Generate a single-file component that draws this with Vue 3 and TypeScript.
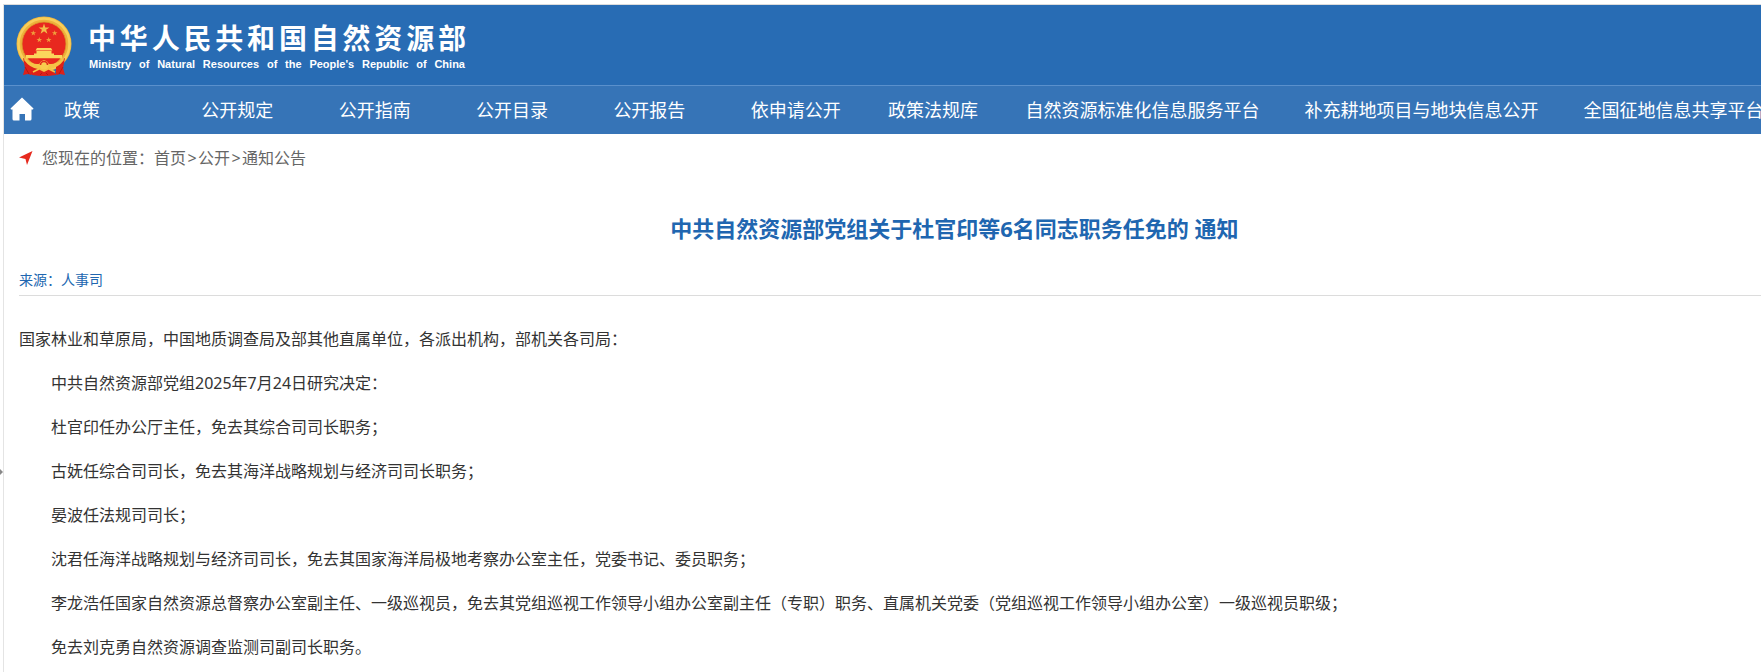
<script setup lang="ts">
const navItems: string[] = [
  '政策',
  '公开规定',
  '公开指南',
  '公开目录',
  '公开报告',
  '依申请公开',
  '政策法规库',
  '自然资源标准化信息服务平台',
  '补充耕地项目与地块信息公开',
  '全国征地信息共享平台',
]

const crumbs: string[] = ['首页', '公开', '通知公告']

const paragraphs: string[] = [
  '中共自然资源部党组2025年7月24日研究决定：',
  '杜官印任办公厅主任，免去其综合司司长职务；',
  '古妩任综合司司长，免去其海洋战略规划与经济司司长职务；',
  '晏波任法规司司长；',
  '沈君任海洋战略规划与经济司司长，免去其国家海洋局极地考察办公室主任，党委书记、委员职务；',
  '李龙浩任国家自然资源总督察办公室副主任、一级巡视员，免去其党组巡视工作领导小组办公室副主任（专职）职务、直属机关党委（党组巡视工作领导小组办公室）一级巡视员职级；',
  '免去刘克勇自然资源调查监测司副司长职务。',
]
</script>

<template>
  <div class="viewport">
    <div class="page">
      <header class="banner">
        <svg class="emblem" viewBox="0 0 56 60" aria-hidden="true">
          <circle cx="28" cy="28" r="27.500" fill="#eeb23c" />
          <circle cx="28" cy="28" r="25.500" fill="none" stroke="#f8cf5a" stroke-width="2.500" />
          <circle cx="28" cy="28" r="22" fill="#e8281f" stroke="#d99a2b" stroke-width="0.800" />
          <path fill="#f2bd4a" d="M28 7.500l1.300 3.900h4.100l-3.300 2.400 1.300 3.900L28 15.300l-3.400 2.400 1.300-3.900-3.300-2.400h4.100z" />
          <g fill="#efa03c">
            <path d="M17.300 14.200l.7 2h2.100l-1.700 1.300.6 2-1.700-1.200-1.700 1.200.6-2-1.700-1.300h2.100z" />
            <path d="M38.700 14.200l.7 2h2.100l-1.700 1.300.6 2-1.700-1.200-1.700 1.200.6-2-1.700-1.300h2.100z" />
            <path d="M23.300 20.900l.7 2h2.100l-1.700 1.300.6 2-1.700-1.200-1.700 1.200.6-2-1.700-1.300h2.100z" />
            <path d="M32.700 20.900l.7 2h2.100l-1.700 1.300.6 2-1.700-1.200-1.700 1.200.6-2-1.700-1.300h2.100z" />
          </g>
          <path fill="#fbd65c" d="M21 32h14l1.500 2.500h-17zM20.500 35h15v2.500h-15zM18 37.500h20V39l8 0v3.500H10V39h8z" />
          <path fill="#e8281f" d="M12 42.500h32q-5 6-11 7h-10q-6-1-11-7z" />
          <path fill="#de2119" d="M7 42l9 5 7 5-8 7-3-1-5 1 2-7zM49 42l-9 5-7 5 8 7 3-1 5 1-2-7zM16 51q12-3 24 0v8q-12 2-24 0z" />
          <path fill="#f5c346" d="M9 42q9 8 15 5.500l4-3.500 4 3.500Q38 50 47 42l1 2q-6 8-14 9l-6 3-6-3q-8-1-14-9z" />
          <circle cx="28" cy="49" r="4.500" fill="#f8cb4e" />
          <path fill="none" stroke="#e02a1c" stroke-width="1.600" d="M24.500 49a3.500 3.500 0 0 1 7 0" />
          <path fill="none" stroke="#f5c346" stroke-width="1.800" d="M17 56l6-3M39 56l-6-3" />
          <path fill="none" stroke="#a91712" stroke-width="0.800" d="M9 51l4 7M47 51l-4 7M26 57l-2 2M30 57l2 2" />
        </svg>
        <div class="brand">
          <div class="brand-zh">中华人民共和国自然资源部</div>
          <div class="brand-en">Ministry of Natural Resources of the People's Republic of China</div>
        </div>
      </header>

      <nav class="nav">
        <a class="home" href="#" aria-label="首页">
          <svg viewBox="0 0 24 24" aria-hidden="true">
            <path fill="#fff" d="M12 0.500L23.500 11.500 23 12.500H21.500V22q0 1.500-1.500 1.500H15V17h-5.500v6.500H4Q2.500 23.500 2.500 22v-9.500H1L0.500 11.500z" />
          </svg>
        </a>
        <a v-for="item in navItems" :key="item" class="nav-link" href="#">{{ item }}</a>
      </nav>

      <main class="content">
        <div class="crumbs">
          <svg class="pointer" viewBox="0 0 14 14" aria-hidden="true">
            <path fill="#e62a1e" d="M13.500 0L8 14 6.500 8 0 6.500z" />
          </svg>
          <span>您现在的位置：</span>
          <template v-for="(crumb, i) in crumbs" :key="crumb">
            <span v-if="i > 0" class="sep">&gt;</span>
            <a href="#">{{ crumb }}</a>
          </template>
        </div>

        <h1 class="title">中共自然资源部党组关于杜官印等6名同志职务任免的 通知</h1>
        <div class="source">来源：人事司</div>

        <article class="body">
          <p class="lead">国家林业和草原局，中国地质调查局及部其他直属单位，各派出机构，部机关各司局：</p>
          <p v-for="text in paragraphs" :key="text">{{ text }}</p>
        </article>
      </main>
    </div>
    <span class="handle"></span>
  </div>
</template>

<style>
body {
  margin: 0;
  background: #fff;
}
</style>

<style scoped>
.viewport {
  position: relative;
  overflow: hidden;
  min-height: 100vh;
  box-sizing: border-box;
  padding-top: 4px;
  font-family: "Noto Sans", "Noto Sans CJK SC", sans-serif;
  color: #333;
}

.page {
  width: 108vw;
  min-height: calc(100vh - 4px);
  box-sizing: border-box;
  margin-left: 3px;
  border-top: 1px solid #dcdcdc;
  border-left: 1px solid #e4e4e4;
}

a {
  color: inherit;
  text-decoration: none;
}

.banner {
  display: flex;
  align-items: flex-start;
  gap: 16px;
  height: 80px;
  box-sizing: border-box;
  padding: 11px 12px 0;
  background: #286cb4;
}

.emblem {
  width: 56px;
  height: 60px;
}

.brand {
  width: 378px;
  padding-top: 3px;
  color: #fff;
  font-weight: 700;
  text-align: justify;
  text-align-last: justify;
  white-space: nowrap;
}

.brand-zh {
  font-size: 28px;
  line-height: 38px;
}

.brand-en {
  padding: 0 1px;
  font-family: "Liberation Sans", Arial, sans-serif;
  font-size: 11px;
  line-height: 14px;
}

.nav {
  display: flex;
  align-items: center;
  height: 49px;
  box-sizing: border-box;
  padding-bottom: 2px;
  border-top: 1px solid #5a90cc;
  background: #3674b7;
  color: #fff;
  font-size: 18px;
  white-space: nowrap;
}

.home {
  flex: none;
  box-sizing: border-box;
  width: 60px;
  padding-left: 6px;
  line-height: 0;
}

.home svg {
  width: 24px;
  height: 24px;
}

.nav-link {
  flex: none;
  box-sizing: border-box;
  min-width: 7.8vw;
  padding-right: 45px;
}

.content {
  padding: 12px 15px 0;
}

.crumbs {
  display: flex;
  align-items: center;
  font-size: 16px;
  line-height: 24px;
  color: #666;
}

.pointer {
  width: 14px;
  height: 14px;
  margin-right: 9px;
}

.sep {
  width: 12px;
  text-align: center;
}

.title {
  margin: 38px 0 0;
  font-size: 22px;
  line-height: 40px;
  font-weight: 700;
  text-align: center;
  color: #2066b0;
}

.source {
  margin-top: 16px;
  padding: 6px 0 5px;
  border-bottom: 1px solid #dcdcdc;
  font-size: 14px;
  line-height: 20px;
  color: #2066b0;
}

.body {
  padding-top: 21px;
  font-size: 16px;
  line-height: 44px;
}

.body p {
  margin: 0;
  text-indent: 2em;
}

.body .lead {
  text-indent: 0;
}

.handle {
  position: absolute;
  left: 0;
  top: 469px;
  border: 3px solid transparent;
  border-left-color: #888;
  border-right: 0;
}
</style>
